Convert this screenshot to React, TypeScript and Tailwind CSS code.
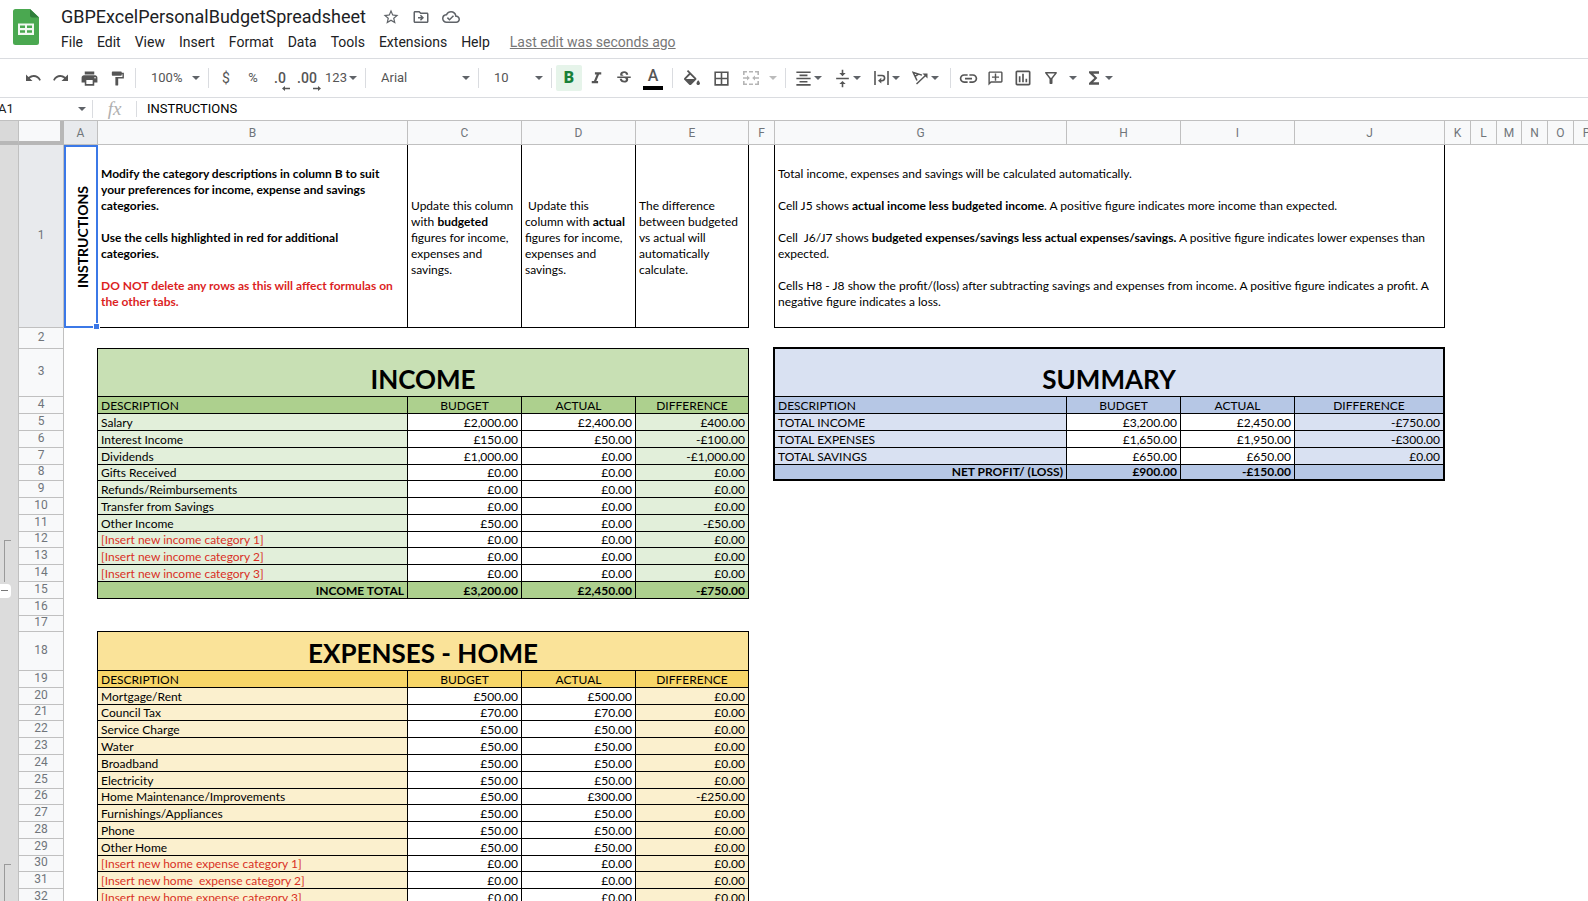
import { Fragment, type ReactNode } from 'react';
import {
  MdBorderAll,
  MdFormatAlignCenter,
  MdFormatItalic,
  MdFormatPaint,
  MdFunctions,
  MdInsertLink,
  MdOutlineAddComment,
  MdOutlineCloudDone,
  MdOutlineDriveFileMove,
  MdOutlineFilterAlt,
  MdOutlineInsertChart,
  MdPrint,
  MdStarBorder,
  MdStrikethroughS,
  MdVerticalAlignCenter,
} from 'react-icons/md';

/* ---------- icons ---------- */

function SheetsLogo() {
  return (
    <svg viewBox="0 0 26 36" className="h-9 w-[26px]" aria-hidden="true">
      <path d="M2.5 0H17l9 8.500V33.500a2.500 2.500 0 0 1-2.500 2.500h-21A2.500 2.500 0 0 1 0 33.500v-31A2.500 2.500 0 0 1 2.500 0Z" fill="#4aa850" />
      <path d="M17 0l9 8.500h-7A2 2 0 0 1 17 6.500Z" fill="#2f7f3b" />
      <path d="M5 14.500h16V26H5Z" fill="#f2f8f2" />
      <path d="M7 16.600h5v2.500H7Zm7 0h5v2.500h-5ZM7 21.300h5v2.500H7Zm7 0h5v2.500h-5Z" fill="#4aa850" />
    </svg>
  );
}

function Caret({ className = 'text-[#5f6368]' }: { className?: string }) {
  return (
    <svg viewBox="0 0 8 4" className={`h-1 w-2 shrink-0 ${className}`} aria-hidden="true">
      <path d="M0 0h8L4 4Z" fill="currentColor" />
    </svg>
  );
}

function UndoIcon({ flip = false }: { flip?: boolean }) {
  return (
    <svg viewBox="0 0 16 8" className={`h-2 w-4 ${flip ? '-scale-x-100' : ''}`} aria-hidden="true">
      <path d="M1 0.500V7h6.500L4.900 4.400C7.600 2 12.500 2.200 14.300 6.700l1.600-.6C13.600 0.400 7.300-.4 3.500 3Z" fill="currentColor" />
    </svg>
  );
}

function FillIcon() {
  return (
    <svg viewBox="2 0 20 18" className="h-4 w-[18px]" fill="currentColor" aria-hidden="true">
      <path d="M16.56 8.94 7.620 0 6.210 1.410l2.380 2.380-5.150 5.150c-.59.59-.59 1.540 0 2.120l5.500 5.500c.29.29.68.44 1.060.44s.77-.15 1.060-.44l5.500-5.500c.59-.58.59-1.530 0-2.120zM5.210 10 10 5.210 14.790 10zM19 11.500s-2 2.170-2 3.500c0 1.100.9 2 2 2s2-.9 2-2c0-1.330-2-3.500-2-3.500z" />
    </svg>
  );
}

function DecimalIcon({ label, right = false }: { label: string; right?: boolean }) {
  return (
    <span className="relative text-sm font-medium">
      {label}
      <svg viewBox="0 0 8 5" className={`absolute -right-1 bottom-[-3px] h-[5px] w-2 ${right ? '-scale-x-100' : ''}`} aria-hidden="true">
        <path d="M3 0v1.800h5v1.400H3V5L0 2.500Z" fill="currentColor" />
      </svg>
    </span>
  );
}

function MergeIcon() {
  return (
    <svg viewBox="0 0 16 14" className="h-3.5 w-4" fill="none" stroke="currentColor" strokeWidth="1.600" aria-hidden="true">
      <path d="M0 .8h4M6 .8h4M12 .8h4M0 13.200h4M6 13.200h4M12 13.200h4M.8 0v4M15.200 0v4M.8 10v4M15.200 10v4" />
      <path d="M0 7h5M16 7h-5" />
      <path d="M4 4.500 6.800 7 4 9.500ZM12 4.500 9.200 7l2.800 2.500Z" fill="currentColor" stroke="none" />
    </svg>
  );
}

function WrapIcon() {
  return (
    <svg viewBox="0 0 15 14" className="h-3.5 w-[15px]" fill="none" stroke="currentColor" strokeWidth="1.600" aria-hidden="true">
      <path d="M1 0v14M14 0v14M3.500 4.500H8a2.600 2.600 0 0 1 0 5.200H6.500" />
      <path d="M7.300 6.800v5.800L4 9.700Z" fill="currentColor" stroke="none" />
    </svg>
  );
}

function RotateIcon() {
  return (
    <svg viewBox="0 0 16 14" className="h-3.5 w-4" fill="none" stroke="currentColor" strokeWidth="1.500" aria-hidden="true">
      <path d="M5 9.500 1.200 1.500l8.800 2.600M3 5.300 6.600 3" />
      <path d="M4.500 13 13.500 4.500" />
      <path d="M15.500 2.500v5l-5-5Z" fill="currentColor" stroke="none" />
    </svg>
  );
}

/* ---------- toolbar pieces ---------- */

function Divider() {
  return <span className="mx-1 h-5 w-px shrink-0 bg-[#dadce0]" />;
}

function Tool({ label, children, className = 'w-7' }: { label: string; children: ReactNode; className?: string }) {
  return (
    <button type="button" aria-label={label} className={`flex h-[26px] shrink-0 items-center justify-center ${className}`}>
      {children}
    </button>
  );
}

function MenuTool({ label, children }: { label: string; children: ReactNode }) {
  return (
    <button type="button" aria-label={label} className="flex h-[26px] w-[39px] shrink-0 items-center gap-0.5 pl-1">
      <span className="flex w-[18px] justify-center">{children}</span>
      <Caret />
    </button>
  );
}

function Picker({ label, value, className }: { label: string; value: string; className: string }) {
  return (
    <span className={`relative flex h-[26px] shrink-0 items-center ${className}`}>
      <select aria-label={label} defaultValue={value} className="w-full appearance-none bg-transparent pl-[11px] text-[13px] outline-none">
        <option>{value}</option>
      </select>
      <span className="pointer-events-none absolute right-1">
        <Caret />
      </span>
    </span>
  );
}

/* ---------- sheet data ---------- */

type Line = { label: string; budget: string; actual: string; diff: string; added?: boolean };

const line = (label: string, budget: string, actual: string, diff: string, added = false): Line => ({
  label,
  budget,
  actual,
  diff,
  added,
});

const income: Line[] = [
  line('Salary', '£2,000.00', '£2,400.00', '£400.00'),
  line('Interest Income', '£150.00', '£50.00', '-£100.00'),
  line('Dividends', '£1,000.00', '£0.00', '-£1,000.00'),
  line('Gifts Received', '£0.00', '£0.00', '£0.00'),
  line('Refunds/Reimbursements', '£0.00', '£0.00', '£0.00'),
  line('Transfer from Savings', '£0.00', '£0.00', '£0.00'),
  line('Other Income', '£50.00', '£0.00', '-£50.00'),
  line('[Insert new income category 1]', '£0.00', '£0.00', '£0.00', true),
  line('[Insert new income category 2]', '£0.00', '£0.00', '£0.00', true),
  line('[Insert new income category 3]', '£0.00', '£0.00', '£0.00', true),
];

const home: Line[] = [
  line('Mortgage/Rent', '£500.00', '£500.00', '£0.00'),
  line('Council Tax', '£70.00', '£70.00', '£0.00'),
  line('Service Charge', '£50.00', '£50.00', '£0.00'),
  line('Water', '£50.00', '£50.00', '£0.00'),
  line('Broadband', '£50.00', '£50.00', '£0.00'),
  line('Electricity', '£50.00', '£50.00', '£0.00'),
  line('Home Maintenance/Improvements', '£50.00', '£300.00', '-£250.00'),
  line('Furnishings/Appliances', '£50.00', '£50.00', '£0.00'),
  line('Phone', '£50.00', '£50.00', '£0.00'),
  line('Other Home', '£50.00', '£50.00', '£0.00'),
  line('[Insert new home expense category 1]', '£0.00', '£0.00', '£0.00', true),
  line('[Insert new home  expense category 2]', '£0.00', '£0.00', '£0.00', true),
  line('[Insert new home expense category 3]', '£0.00', '£0.00', '£0.00', true),
];

const summary: Line[] = [
  line('TOTAL INCOME', '£3,200.00', '£2,450.00', '-£750.00'),
  line('TOTAL EXPENSES', '£1,650.00', '£1,950.00', '-£300.00'),
  line('TOTAL SAVINGS', '£650.00', '£650.00', '£0.00'),
];

const columns = [
  { name: 'A', width: 'w-[34px]' },
  { name: 'B', width: 'w-[310px]' },
  { name: 'C', width: 'w-[114px]' },
  { name: 'D', width: 'w-[114px]' },
  { name: 'E', width: 'w-[113px]' },
  { name: 'F', width: 'w-[26px]' },
  { name: 'G', width: 'w-[292px]' },
  { name: 'H', width: 'w-[114px]' },
  { name: 'I', width: 'w-[114px]' },
  { name: 'J', width: 'w-[150px]' },
  { name: 'K', width: 'w-[26px]' },
  { name: 'L', width: 'w-[26px]' },
  { name: 'M', width: 'w-[25px]' },
  { name: 'N', width: 'w-[26px]' },
  { name: 'O', width: 'w-[26px]' },
  { name: 'P', width: '' },
];

const compactRows = [8, 12, 17, 21, 26, 30];

function rowHeight(n: number) {
  if (n === 1) return 'h-[183px]';
  if (n === 2) return 'h-[21px]';
  if (n === 3) return 'h-12';
  if (n === 18) return 'h-[39px]';
  return compactRows.includes(n) ? 'h-4' : 'h-[17px]';
}

/* ---------- cells ---------- */

const cell = 'border-b border-r border-black px-[3px] align-bottom whitespace-pre';
const num = `${cell} text-right`;

function Gutter({ n }: { n: number }) {
  if (n === 12 || n === 30) {
    return (
      <td rowSpan={3} className="border-r border-[#c0c0c0] bg-[#dcdcdc] align-bottom">
        <div className="ml-1 h-[42px] w-[7px] border-l border-t border-[#9a9a9a]" />
      </td>
    );
  }
  if (n === 13 || n === 14 || n === 31 || n === 32) return null;
  return (
    <td className="border-r border-[#c0c0c0] bg-[#dcdcdc] align-middle">
      {n === 15 && (
        <button type="button" aria-label="Collapse group" className="flex h-3.5 w-[11px] items-center rounded-r-sm bg-white">
          <span className="ml-px h-px w-[7px] bg-[#777]" />
        </button>
      )}
    </td>
  );
}

function TitleCells({ title, className }: { title: string; className: string }) {
  return (
    <td colSpan={4} className={`${cell} text-center text-[26px] leading-[34px] font-bold ${className}`}>
      {title}
    </td>
  );
}

function HeadingCells({ bg, lastCell = '' }: { bg: string; lastCell?: string }) {
  return (
    <>
      <td className={`${cell} ${bg}`}>DESCRIPTION</td>
      <td className={`${cell} ${bg} text-center`}>BUDGET</td>
      <td className={`${cell} ${bg} text-center`}>ACTUAL</td>
      <td className={`${cell} ${bg} text-center ${lastCell}`}>DIFFERENCE</td>
    </>
  );
}

function LineCells({ item, bg, lastCell = '' }: { item: Line; bg: string; lastCell?: string }) {
  return (
    <>
      <td className={`${cell} ${bg} ${item.added ? 'text-[#d93025]' : ''}`}>{item.label}</td>
      <td className={num}>{item.budget}</td>
      <td className={num}>{item.actual}</td>
      <td className={`${num} ${bg} ${lastCell}`}>{item.diff}</td>
    </>
  );
}

function TotalCells({ label, values, bg, edge = '', lastCell = '' }: { label: string; values: string[]; bg: string; edge?: string; lastCell?: string }) {
  return (
    <>
      <td className={`${num} ${bg} ${edge} font-bold`}>{label}</td>
      <td className={`${num} ${bg} ${edge} font-bold`}>{values[0]}</td>
      <td className={`${num} ${bg} ${edge} font-bold`}>{values[1]}</td>
      <td className={`${num} ${bg} ${edge} font-bold ${lastCell}`}>{values[2]}</td>
    </>
  );
}

const note = 'border-b border-r border-black px-[3px] pt-[3px] align-middle leading-4';

function InstructionCells() {
  return (
    <>
      <td className="relative border-2 border-[#3b78e7] p-0 align-middle">
        <div className="flex items-center justify-center pl-[3px]">
          <span className="rotate-180 text-[14px] leading-4 font-bold [writing-mode:vertical-rl]">INSTRUCTIONS</span>
        </div>
        <span className="absolute -right-1 -bottom-1 z-10 size-[7px] border border-white bg-[#3b78e7]" />
      </td>
      <td className={`${note} font-bold`}>
        <p>Modify the category descriptions in column B to suit your preferences for income, expense and savings categories.</p>
        <p className="mt-4">
          Use the cells highlighted in red for additional
          <br />
          categories.
        </p>
        <p className="mt-4 text-[#dc1f1f]">DO NOT delete any rows as this will affect formulas on the other tabs.</p>
      </td>
      <td className={note}>
        Update this column with <b>budgeted</b> figures for income, expenses and savings.
      </td>
      <td className={note}>
        &nbsp;Update this
        <br />
        column with <b>actual</b> figures for income, expenses and savings.
      </td>
      <td className={note}>The difference between budgeted vs actual will automatically calculate.</td>
      <td className="border-r border-black" />
      <td colSpan={4} className={note}>
        <p>Total income, expenses and savings will be calculated automatically.</p>
        <p className="mt-4">
          Cell J5 shows <b>actual income less budgeted income</b>. A positive figure indicates more income than expected.
        </p>
        <p className="mt-4">
          Cell&nbsp; J6/J7 shows <b>budgeted expenses/savings less actual expenses/savings.</b> A positive figure indicates lower expenses than expected.
        </p>
        <p className="mt-4">
          Cells H8 - J8 show the profit/(loss) after subtracting savings and expenses from income. A positive figure indicates a profit. A negative figure indicates a loss.
        </p>
      </td>
    </>
  );
}

function LeftCells({ n }: { n: number }) {
  if (n === 3) return <TitleCells title="INCOME" className="bg-[#c8e0b4]" />;
  if (n === 4) return <HeadingCells bg="bg-[#add08e]" />;
  if (n >= 5 && n <= 14) return <LineCells item={income[n - 5]} bg="bg-[#e2efda]" />;
  if (n === 15) return <TotalCells label="INCOME TOTAL" values={['£3,200.00', '£2,450.00', '-£750.00']} bg="bg-[#add08e]" />;
  if (n === 18) return <TitleCells title="EXPENSES - HOME" className="bg-[#fae399]" />;
  if (n === 19) return <HeadingCells bg="bg-[#f7d668]" />;
  if (n >= 20) return <LineCells item={home[n - 20]} bg="bg-[#fbf0ce]" />;
  return <td colSpan={4} className={n === 16 ? '' : 'border-b border-black'} />;
}

function RightCells({ n }: { n: number }) {
  if (n === 2) return <td colSpan={4} className="border-b-2 border-black" />;
  if (n === 3) return <TitleCells title="SUMMARY" className="border-r-2 bg-[#d9e1f2]" />;
  if (n === 4) return <HeadingCells bg="bg-[#b6c7e5]" lastCell="border-r-2" />;
  if (n >= 5 && n <= 7) return <LineCells item={summary[n - 5]} bg="bg-[#d9e1f2]" lastCell="border-r-2" />;
  if (n === 8) {
    return (
      <TotalCells
        label="NET PROFIT/ (LOSS)"
        values={['£900.00', '-£150.00', '']}
        bg="bg-[#b6c7e5]"
        edge="border-b-2"
        lastCell="border-r-2"
      />
    );
  }
  return <td colSpan={4} />;
}

function edgeA(n: number) {
  if (n === 2 || n === 17) return 'relative after:absolute after:right-0 after:bottom-0 after:size-px after:bg-black';
  return (n >= 3 && n <= 15) || n >= 18 ? 'border-r border-black' : '';
}

function edgeF(n: number) {
  if (n === 2) return 'relative after:absolute after:right-0 after:bottom-0 after:size-0.5 after:bg-black';
  return n >= 3 && n <= 8 ? 'border-r-2 border-black' : '';
}

function Sheet() {
  return (
    <table className="w-full min-w-[1600px] table-fixed border-separate border-spacing-0 font-['Lato',sans-serif] text-[12px] leading-[14px] text-black">
      <colgroup>
        <col className="w-[19px]" />
        <col className="w-[45px]" />
        {columns.map((c) => (
          <col key={c.name} className={c.width} />
        ))}
      </colgroup>
      <thead>
        <tr className="h-6 font-['Roboto',sans-serif] text-[12px] text-[#70757a]">
          <td className="border-r border-b-4 border-r-[#c0c0c0] border-b-[#b7b7b7] bg-[#d9d9d9]" />
          <td className="border-r-4 border-b-4 border-[#b7b7b7] bg-[#f8f9fa]" />
          {columns.map((c) => (
            <th
              key={c.name}
              scope="col"
              className={`border-r border-b border-[#c0c0c0] p-0 font-normal ${c.name === 'A' ? 'bg-[#e8eaed]' : 'bg-[#f8f9fa]'}`}
            >
              {c.name}
            </th>
          ))}
        </tr>
      </thead>
      <tbody>
        {Array.from({ length: 32 }, (_, i) => i + 1).map((n) => (
          <tr key={n} className={rowHeight(n)}>
            <Gutter n={n} />
            <th
              scope="row"
              className={`border-r border-b border-[#c0c0c0] px-0 pt-0 pb-0.5 font-['Roboto',sans-serif] text-[12px] leading-[13px] font-normal text-[#70757a] ${
                n === 1 ? 'bg-[#e8eaed]' : 'bg-[#f8f9fa]'
              }`}
            >
              {n}
            </th>
            {n === 1 ? (
              <InstructionCells />
            ) : (
              <Fragment>
                <td className={edgeA(n)} />
                <LeftCells n={n} />
                <td className={edgeF(n)} />
                <RightCells n={n} />
              </Fragment>
            )}
            <td colSpan={6} />
          </tr>
        ))}
      </tbody>
    </table>
  );
}

/* ---------- page ---------- */

const menus = ['File', 'Edit', 'View', 'Insert', 'Format', 'Data', 'Tools', 'Extensions', 'Help'];

export default function App() {
  return (
    <div className="flex h-screen flex-col overflow-hidden bg-white font-['Roboto',sans-serif] text-[#202124]">
      <header className="flex h-[59px] shrink-0 items-start border-b border-[#dadce0] pl-[13px]">
        <a href="#home" aria-label="Sheets home" className="mt-[9px]">
          <SheetsLogo />
        </a>
        <div className="ml-[22px] flex flex-col pt-1">
          <div className="flex h-[26px] items-center gap-3 text-[#5f6368]">
            <h1 className="mr-1 text-[18px] leading-6 text-[#202124]">GBPExcelPersonalBudgetSpreadsheet</h1>
            <button type="button" aria-label="Star">
              <MdStarBorder className="size-[18px]" />
            </button>
            <button type="button" aria-label="Move">
              <MdOutlineDriveFileMove className="size-[18px]" />
            </button>
            <button type="button" aria-label="Document status">
              <MdOutlineCloudDone className="size-[18px]" />
            </button>
          </div>
          <nav className="flex h-6 items-center gap-3.5 text-[14px]">
            {menus.map((m) => (
              <button key={m} type="button">
                {m}
              </button>
            ))}
            <a href="#history" className="ml-1.5 text-[#777] underline">
              Last edit was seconds ago
            </a>
          </nav>
        </div>
      </header>

      <div role="toolbar" aria-label="Formatting" className="flex h-[39px] shrink-0 items-center border-b border-[#dadce0] pl-[19px] text-[#555]">
        <Tool label="Undo"><UndoIcon /></Tool>
        <Tool label="Redo"><UndoIcon flip /></Tool>
        <Tool label="Print"><MdPrint className="size-[19px]" /></Tool>
        <Tool label="Paint format"><MdFormatPaint className="size-[17px]" /></Tool>
        <Divider />
        <Picker label="Zoom" value="100%" className="w-16" />
        <Divider />
        <Tool label="Format as currency" className="w-[26px]"><span className="text-sm">$</span></Tool>
        <Tool label="Format as percent"><span className="text-[13px]">%</span></Tool>
        <Tool label="Decrease decimal places" className="w-[26px]"><DecimalIcon label=".0" /></Tool>
        <Tool label="Increase decimal places"><DecimalIcon label=".00" right /></Tool>
        <Tool label="More formats" className="w-10 gap-0.5">
          <span className="text-[13px]">123</span>
          <Caret />
        </Tool>
        <Divider />
        <Picker label="Font" value="Arial" className="w-[104px]" />
        <Divider />
        <Picker label="Font size" value="10" className="w-16" />
        <Divider />
        <Tool label="Bold" className="w-[26px] rounded-xs bg-[#e6f4ea] text-[#188038]">
          <span className="text-[16px] font-black">B</span>
        </Tool>
        <Tool label="Italic"><MdFormatItalic className="size-[19px]" /></Tool>
        <Tool label="Strikethrough"><MdStrikethroughS className="size-[18px]" /></Tool>
        <Tool label="Text color" className="w-[30px]">
          <span className="flex flex-col items-center">
            <span className="text-[16px] leading-5 font-medium">A</span>
            <span className="h-1 w-5 bg-black" />
          </span>
        </Tool>
        <Divider />
        <Tool label="Fill color" className="w-[30px]"><FillIcon /></Tool>
        <Tool label="Borders"><MdBorderAll className="size-[19px]" /></Tool>
        <Tool label="Merge cells" className="ml-0.5 w-7 text-[#b5b5b5]"><MergeIcon /></Tool>
        <Tool label="Merge options" className="w-4"><Caret className="text-[#bbb]" /></Tool>
        <Divider />
        <MenuTool label="Horizontal align"><MdFormatAlignCenter className="size-[19px] shrink-0" /></MenuTool>
        <MenuTool label="Vertical align"><MdVerticalAlignCenter className="size-[19px] shrink-0" /></MenuTool>
        <MenuTool label="Text wrapping"><WrapIcon /></MenuTool>
        <MenuTool label="Text rotation"><RotateIcon /></MenuTool>
        <Divider />
        <Tool label="Insert link" className="w-[26px]"><MdInsertLink className="size-[21px]" /></Tool>
        <Tool label="Insert comment"><MdOutlineAddComment className="size-[17px] -scale-x-100" /></Tool>
        <Tool label="Insert chart"><MdOutlineInsertChart className="size-5" /></Tool>
        <Tool label="Create a filter"><MdOutlineFilterAlt className="size-[18px]" /></Tool>
        <Tool label="Filter views" className="w-4"><Caret /></Tool>
        <MenuTool label="Functions"><MdFunctions className="size-5 shrink-0" /></MenuTool>
      </div>

      <div className="flex h-[23px] shrink-0 items-center border-b border-[#c0c0c0] text-[13px]">
        <span className="relative flex w-[92px] items-center">
          <input aria-label="Name box" defaultValue="A1" className="w-full indent-[-2px] outline-none" />
          <span className="absolute right-1.5">
            <Caret />
          </span>
        </span>
        <span className="h-[18px] w-px bg-[#dadce0]" />
        <span className="w-[43px] text-center font-['Liberation_Serif',serif] text-[19px] leading-5 text-[#b0b0b0] italic">fx</span>
        <span className="h-4 w-px bg-[#dadce0]" />
        <input aria-label="Formula" defaultValue="INSTRUCTIONS" className="min-w-0 flex-1 pl-2.5 text-black outline-none" />
      </div>

      <main className="min-h-0 flex-1 overflow-hidden">
        <Sheet />
      </main>
    </div>
  );
}
